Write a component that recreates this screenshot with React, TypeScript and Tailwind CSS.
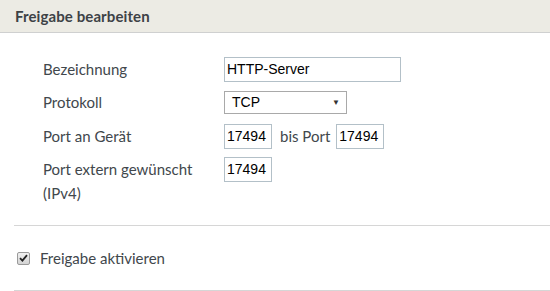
export default function App() {
  const label = "text-[15px] leading-[25px] text-[#41474c]";
  const field =
    "h-[25px] border border-[#b3c0c8] bg-white px-[2px] text-[14px] leading-[23px] text-black font-['Liberation_Sans',Arial,sans-serif]";

  return (
    <div className="w-[550px] h-[291px] bg-white font-['Lato','Noto_Sans',sans-serif] overflow-hidden">
      {/* Header */}
      <div className="h-[33px] bg-[#ecebe4] border-b border-[#cfd0d0] pl-[15px] flex items-center">
        <h2 className="text-[15px] leading-[20px] font-bold text-[#3d4246] tracking-[0.1px]">Freigabe bearbeiten</h2>
      </div>

      {/* Form */}
      <div className="h-[192px] pl-[43px] pt-[24px] flex flex-col">
        <div className="h-[25px] flex items-start">
          <div className={`${label} w-[181px]`}>Bezeichnung</div>
          <div className={`${field} w-[177px]`}>HTTP-Server</div>
        </div>

        <div className="h-[23px] flex items-start mt-[9px]">
          <div className="text-[15px] leading-[23px] text-[#41474c] w-[181px]">Protokoll</div>
          <div className="h-[23px] w-[123px] border border-[#a9a9a9] bg-white pl-[7px] pr-[6px] flex items-center justify-between text-[14px] text-black font-['Liberation_Sans',Arial,sans-serif]">
            <span>TCP</span>
            <span className="text-[8px] text-[#333]">▼</span>
          </div>
        </div>

        <div className="h-[25px] flex items-start mt-[10px]">
          <div className={`${label} w-[181px]`}>Port an Gerät</div>
          <div className={`${field} w-[48px]`}>17494</div>
          <div className={`${label} ml-[8px] mr-[6px]`}>bis Port</div>
          <div className={`${field} w-[48px]`}>17494</div>
        </div>

        <div className="flex items-start mt-[8px]">
          <div className="w-[181px] flex flex-col text-[15px] leading-[24px] text-[#41474c]">
            <span className="h-[24px]">Port extern gewünscht</span>
            <span className="h-[24px]">(IPv4)</span>
          </div>
          <div className={`${field} w-[48px]`}>17494</div>
        </div>
      </div>

      <div className="ml-[14px] h-px bg-[#d6d6d6]" />

      {/* Checkbox row */}
      <div className="h-[64px] pl-[17px] flex items-center">
        <span className="w-[13px] h-[13px] border border-[#9a9a9a] rounded-[2px] bg-gradient-to-b from-[#f0f0f0] to-[#d4d4d4] flex items-center justify-center">
          <svg width="9" height="8" viewBox="0 0 9 8">
            <path d="M1 4.2 L3.4 6.6 L8 1.2" stroke="#222" strokeWidth="1.8" fill="none" />
          </svg>
        </span>
        <span className="ml-[10px] text-[15px] text-[#41474c]">Freigabe aktivieren</span>
      </div>

      <div className="ml-[14px] h-px bg-[#d6d6d6]" />
    </div>
  );
}
